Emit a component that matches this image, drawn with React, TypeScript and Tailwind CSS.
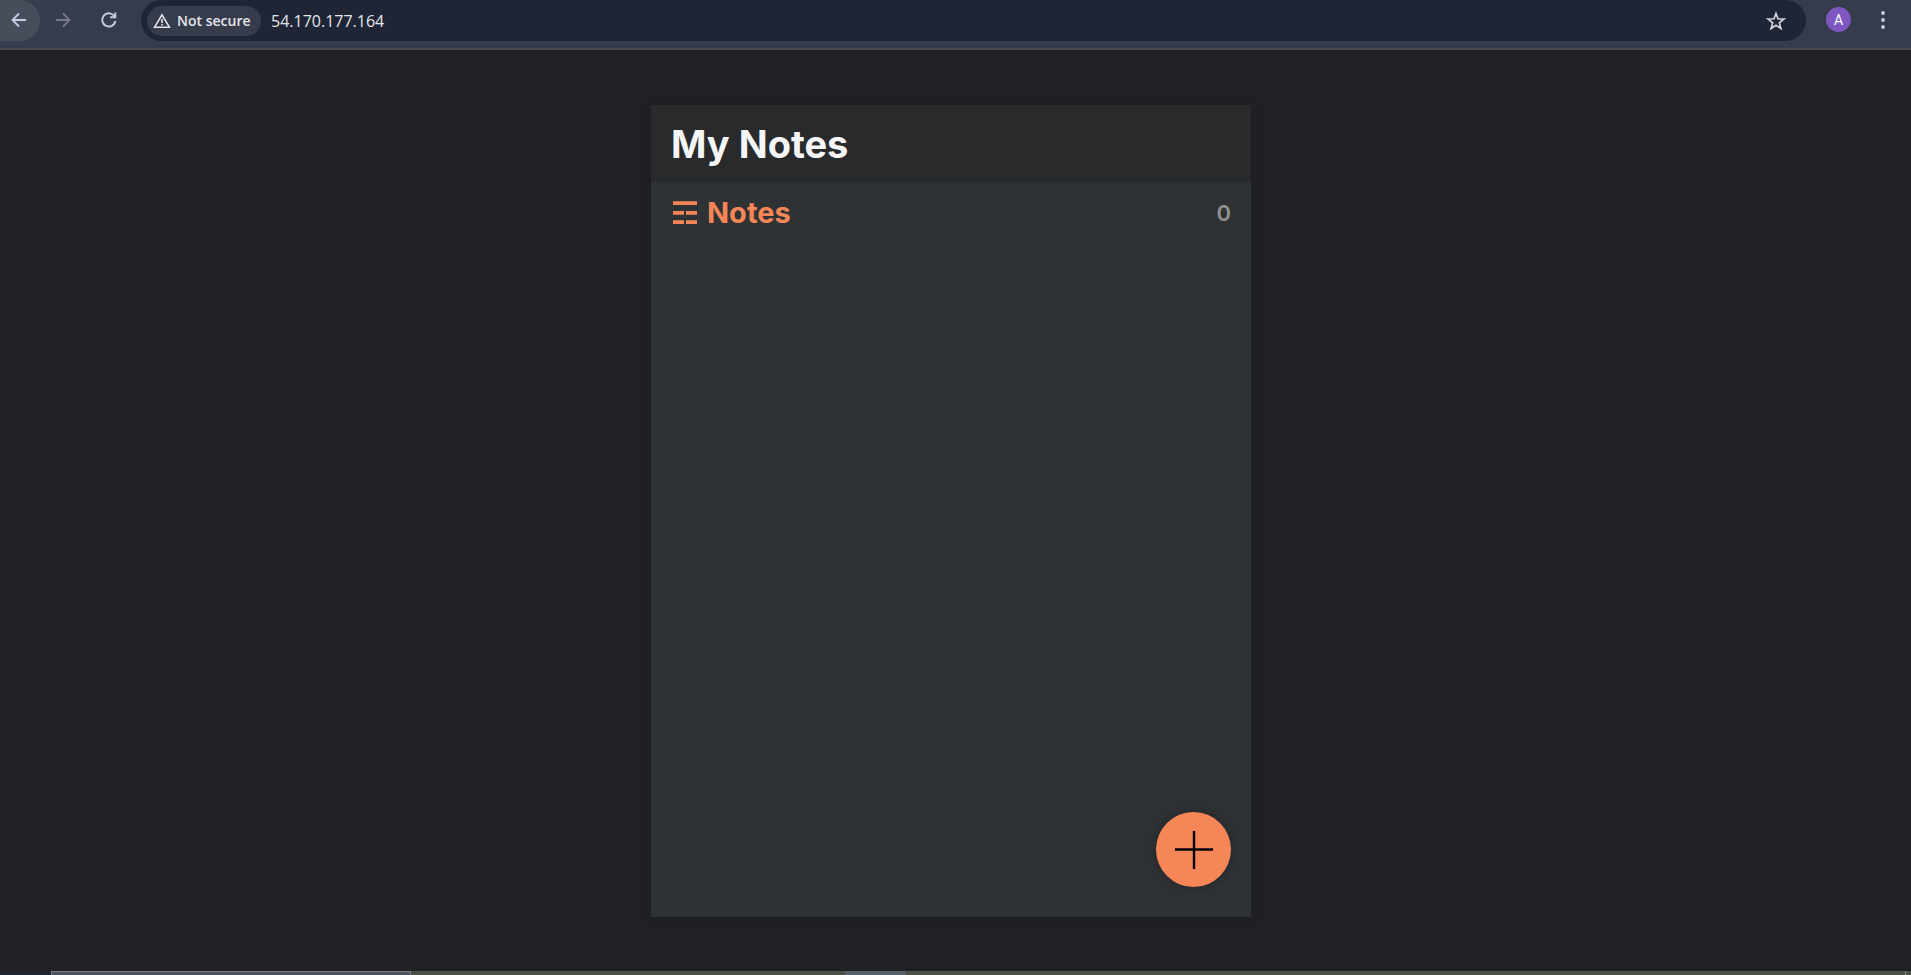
import React from "react";

function BrowserBar() {
  return (
    <header className="flex h-[50px] shrink-0 items-start border-b-2 border-[#47474f] bg-[#373c4d] font-['Open_Sans','Noto_Sans',sans-serif]">
      <nav className="flex h-[39px] w-[141px] shrink-0 items-center" aria-label="Browser navigation">
        <button
          type="button"
          aria-label="Back"
          className="flex h-[41px] w-10 shrink-0 items-center justify-center self-start rounded-l-[20px] rounded-r-full bg-[#484d5c] pr-[2px] pb-[2px] text-[#c6cbe2]"
        >
          <svg width="16" height="16" viewBox="0 0 16 16" fill="none" stroke="currentColor" strokeWidth="1.9">
            <path d="M15 8H2M8 1.5L1.5 8L8 14.5" />
          </svg>
        </button>
        <button type="button" aria-label="Forward" className="flex h-[39px] w-[46px] shrink-0 items-center justify-center text-[#767a88]">
          <svg width="16" height="16" viewBox="0 0 16 16" fill="none" stroke="currentColor" strokeWidth="1.9">
            <path d="M1 8H14M8 1.5L14.5 8L8 14.5" />
          </svg>
        </button>
        <button type="button" aria-label="Reload" className="flex h-[39px] w-[45px] shrink-0 items-center justify-center text-[#c6cbe2]">
          <svg width="16" height="16" viewBox="0 0 16 16" fill="none" stroke="currentColor" strokeWidth="1.9">
            <path d="M13.6 4.6A6.6 6.6 0 1 0 14.4 9" />
            <path d="M14.3 0.5V5.3H9.2" />
          </svg>
        </button>
      </nav>
      <div className="flex h-[41px] min-w-0 flex-1 items-center rounded-full bg-[#1f2535] pr-5 pl-[6px]">
        <button
          type="button"
          className="flex h-[30px] w-[114px] shrink-0 items-center gap-[6px] rounded-full bg-[#373c4d] pl-[6px] text-[14px] leading-5 font-semibold whitespace-nowrap text-[#e3e4ea]"
        >
          <svg className="shrink-0" width="18" height="16" viewBox="0 0 18 16" fill="none" stroke="currentColor" strokeWidth="1.6">
            <path d="M9 1.8L16.4 14.2H1.6Z" />
            <path d="M9 6V10M9 11V12.6" />
          </svg>
          Not secure
        </button>
        <input
          aria-label="Address"
          defaultValue="54.170.177.164"
          className="ml-[10px] min-w-0 flex-1 bg-transparent text-[16px] leading-6 text-[#e6e8ee] outline-none"
        />
        <button type="button" aria-label="Bookmark this page" className="text-[#d3d4da]">
          <svg width="20" height="20" viewBox="0 0 20 20" fill="none" stroke="currentColor" strokeWidth="1.7">
            <path d="M10 2.5L12 7.8L17.9 8.1L13.3 11.8L14.9 17.5L10 14.3L5.1 17.5L6.7 11.8L2.1 8.1L8 7.8Z" />
          </svg>
        </button>
      </div>
      <div className="flex h-[39px] w-[105px] shrink-0 items-center pl-5">
        <button
          type="button"
          aria-label="Profile"
          className="flex size-[25px] items-center justify-center rounded-full bg-[#7e57c2] font-[Roboto,sans-serif] text-[14px] leading-none text-white"
        >
          A
        </button>
        <button type="button" aria-label="Browser menu" className="ml-[22px] flex w-5 justify-center text-[#c6cbe2]">
          <svg width="4" height="18" viewBox="0 0 4 18" fill="currentColor">
            <circle cx="2" cy="2" r="1.9" />
            <circle cx="2" cy="9" r="1.9" />
            <circle cx="2" cy="16" r="1.9" />
          </svg>
        </button>
      </div>
    </header>
  );
}

function NotesCard() {
  return (
    <section className="relative flex w-full max-w-[600px] flex-col bg-[#2e3235] shadow-[0_0_10px_rgba(0,0,0,0.15)]">
      <div className="flex h-[77px] items-center bg-[#292a2c] px-5">
        <h1 className="text-[38px] leading-[48px] font-bold text-[#f5f6f7]">My Notes</h1>
      </div>
      <div className="flex h-[62px] items-center justify-between px-5">
        <h2 className="flex items-center gap-[10px] text-[29px] leading-9 font-bold text-[#f68657]">
          <svg className="ml-[2px]" width="24" height="24" viewBox="0 0 24 24" fill="currentColor" aria-hidden="true">
            <path d="M0 0.3H24V4H0ZM0 10H11V13.7H0ZM13 10H24V13.7H13ZM0 19.3H11V23H0ZM13 19.3H24V23H13Z" />
          </svg>
          Notes
        </h2>
        <p className="text-[22px] leading-7 font-semibold text-[#919191]">0</p>
      </div>
      <button
        type="button"
        aria-label="Add note"
        className="absolute right-5 bottom-[30px] flex size-[75px] items-center justify-center rounded-full bg-[#f68657] text-black shadow-[0_0_12px_rgba(0,0,0,0.25)]"
      >
        <svg width="38" height="38" viewBox="0 0 38 38" fill="none" stroke="currentColor" strokeWidth="2.4">
          <path d="M19 0V38M0 18.5H38" />
        </svg>
      </button>
    </section>
  );
}

export default function App() {
  return (
    <div className="flex min-h-screen flex-col bg-[#202124] font-[Inter,sans-serif]">
      <BrowserBar />
      <main className="flex flex-1 justify-center pt-[55px] pr-[9px] pb-[54px]">
        <NotesCard />
      </main>
      <footer className="flex h-1 shrink-0 bg-[#4b5147]" aria-hidden="true">
        <div className="w-[51px] bg-[#1c2530]" />
        <div className="w-[360px] border-x border-t border-[#777d84] bg-[#4c535d]" />
        <div className="w-[434px]" />
        <div className="w-[61px] bg-[#566069]" />
        <div className="mr-[5px] flex-1 border-r border-[#8c9188]" />
      </footer>
    </div>
  );
}
